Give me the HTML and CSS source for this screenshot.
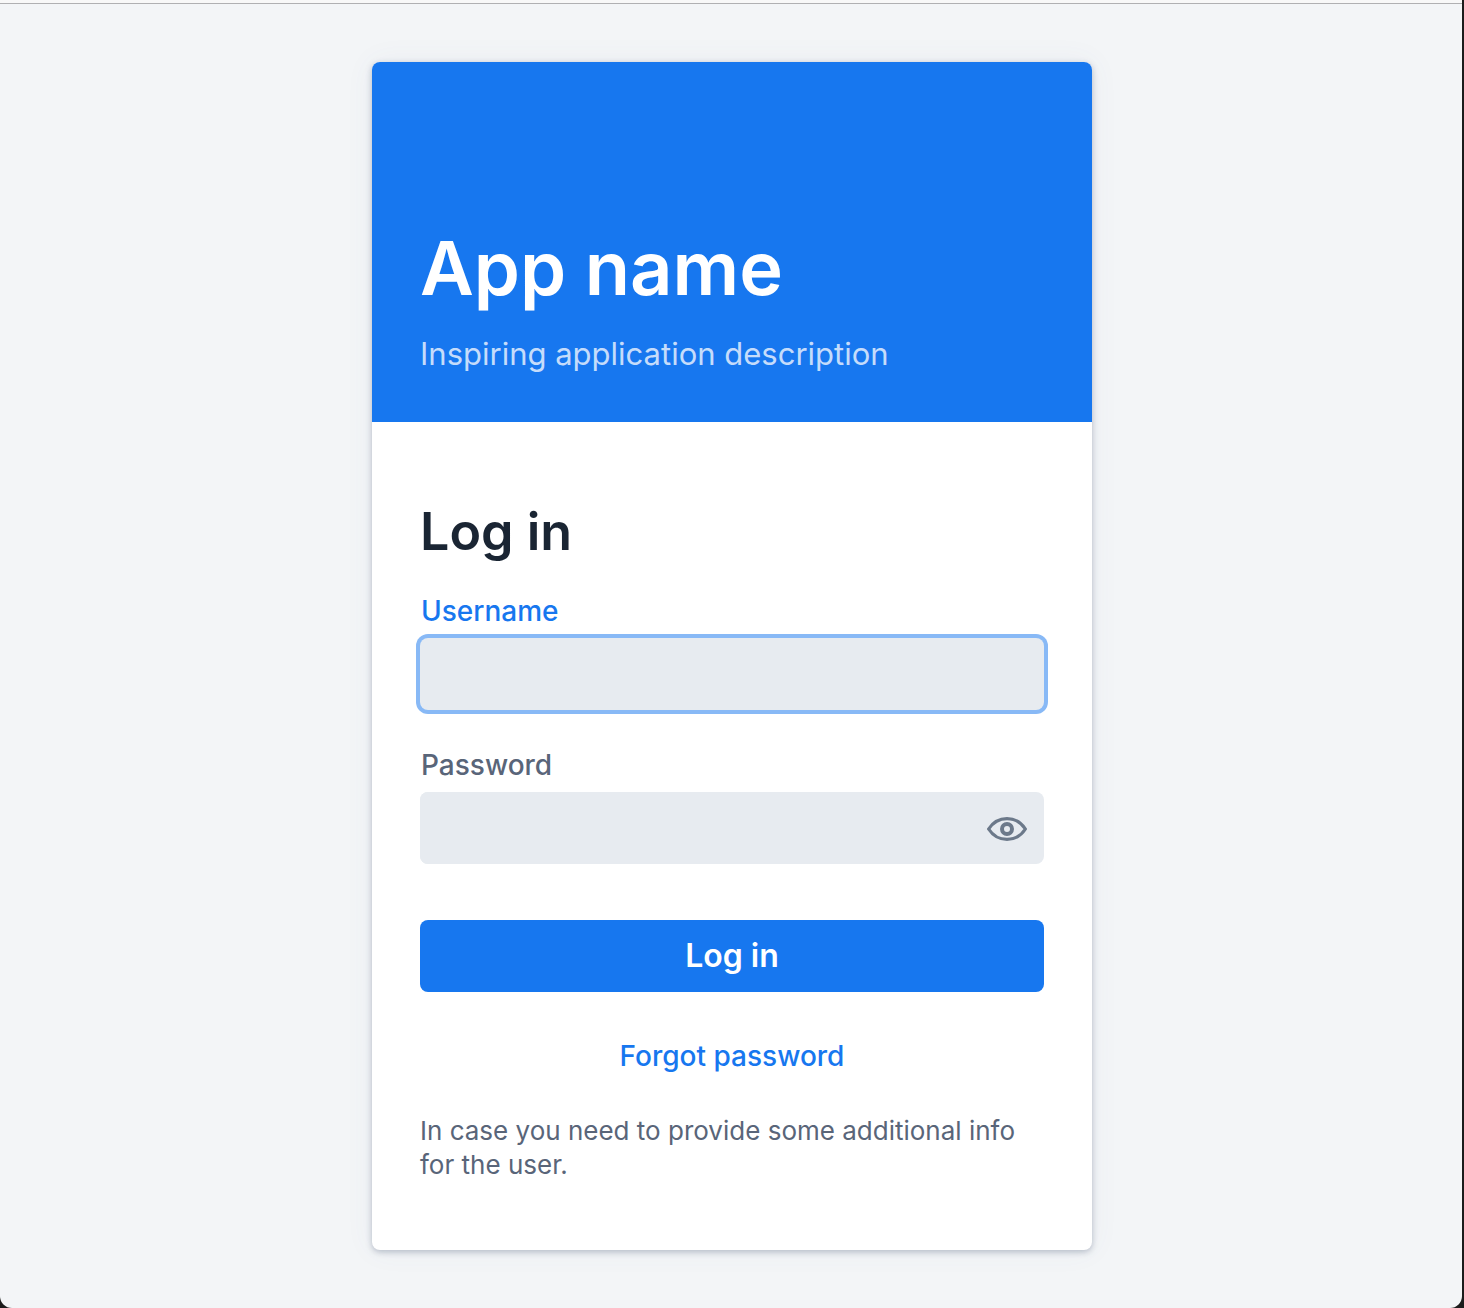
FILE: index.html
```html
<!DOCTYPE html>
<html lang="en">
<head>
<meta charset="utf-8">
<meta name="viewport" content="width=device-width, initial-scale=1">
<title>Log in</title>
<link rel="stylesheet" href="styles.css">
</head>
<body>
<main class="window">
  <section class="card">
    <header class="brand">
      <h1 class="brand-name">App name</h1>
      <p class="brand-text">Inspiring application description</p>
    </header>
    <form class="form">
      <h2 class="form-title">Log in</h2>
      <div class="field field-active">
        <label class="label" for="username">Username</label>
        <input class="input" id="username" type="text">
      </div>
      <div class="field">
        <label class="label" for="password">Password</label>
        <div class="input-wrap">
          <input class="input" id="password" type="password">
          <button class="reveal" type="button" aria-label="Show password">
            <svg width="40" height="24" viewBox="0 0 40 24" fill="none" stroke="currentColor" aria-hidden="true">
              <path d="M1.600 12C5.500 6 12 1.600 20 1.600S34.500 6 38.400 12C34.500 18 28 22.400 20 22.400S5.500 18 1.600 12Z" stroke-width="3.200" stroke-linejoin="round"/>
              <circle cx="20" cy="12" r="5" stroke-width="4"/>
            </svg>
          </button>
        </div>
      </div>
      <button class="submit" type="submit">Log in</button>
      <a class="forgot" href="#forgot">Forgot password</a>
      <p class="info">In case you need to provide some additional info for the user.</p>
    </form>
  </section>
</main>
</body>
</html>
```

FILE: styles.css
```css
* {
  box-sizing: border-box;
}

body {
  margin: 0;
  padding-top: 3px;
  background: #1c1c1c;
  font-family: Inter, "Liberation Sans", sans-serif;
  color: #596579;
}

h1, h2, p {
  margin: 0;
}

.window {
  min-height: calc(100vh - 3px);
  margin-right: 2px;
  padding: 58px 0 58px 2px;
  display: flex;
  justify-content: center;
  align-items: flex-start;
  background: #f3f5f7;
  border-top: 1px solid #b0b0b2;
  border-radius: 0 0 12px 12px;
  box-shadow: 0 -3px 0 #f8f8f8;
}

.card {
  width: 100%;
  max-width: 720px;
  background: #fff;
  border-radius: 8px;
  overflow: hidden;
  box-shadow: 0 2px 6px rgba(89, 105, 129, .4), 0 0 30px rgba(89, 105, 129, .06);
}

.brand {
  min-height: 360px;
  padding: 48px;
  display: flex;
  flex-direction: column;
  justify-content: flex-end;
  gap: 22px;
  background: #1777ef;
}

.brand-name {
  font-size: 74px;
  line-height: 88px;
  font-weight: 600;
  color: #fff;
}

.brand-text {
  font-size: 31px;
  line-height: 40px;
  color: #c5dcfb;
}

.form {
  padding: 78px 48px 68px;
  display: flex;
  flex-direction: column;
}

.form-title {
  margin-bottom: 28px;
  font-size: 52px;
  line-height: 64px;
  font-weight: 600;
  color: #1a2533;
}

.field {
  margin-bottom: 36px;
  display: flex;
  flex-direction: column;
  gap: 8px;
}

.label {
  padding-left: 1px;
  font-size: 28px;
  line-height: 38px;
  font-weight: 500;
}

.field-active .label {
  color: #1777ef;
}

.input {
  display: block;
  width: 100%;
  height: 72px;
  padding: 0 16px;
  border: 0;
  border-radius: 8px;
  outline: 0;
  background: #e7ebf0;
  font: inherit;
  font-size: 31px;
  color: #1a2533;
}

.field-active .input {
  box-shadow: 0 0 0 4px #88b9f6;
}

.input-wrap {
  display: flex;
  align-items: center;
  background: #e7ebf0;
  border-radius: 8px;
}

.reveal {
  flex: none;
  margin: 0;
  padding: 2px 17px 0;
  border: 0;
  background: none;
  color: #6c798a;
}

.reveal svg {
  display: block;
}

.submit {
  height: 72px;
  margin: 20px 0 46px;
  border: 0;
  border-radius: 8px;
  background: #1777ef;
  font: 600 32px/40px Inter, "Liberation Sans", sans-serif;
  color: #fff;
}

.forgot {
  align-self: center;
  margin-bottom: 40px;
  font-size: 28px;
  line-height: 36px;
  font-weight: 500;
  color: #1777ef;
  text-decoration: none;
}

.info {
  font-size: 26px;
  line-height: 34px;
}
```
